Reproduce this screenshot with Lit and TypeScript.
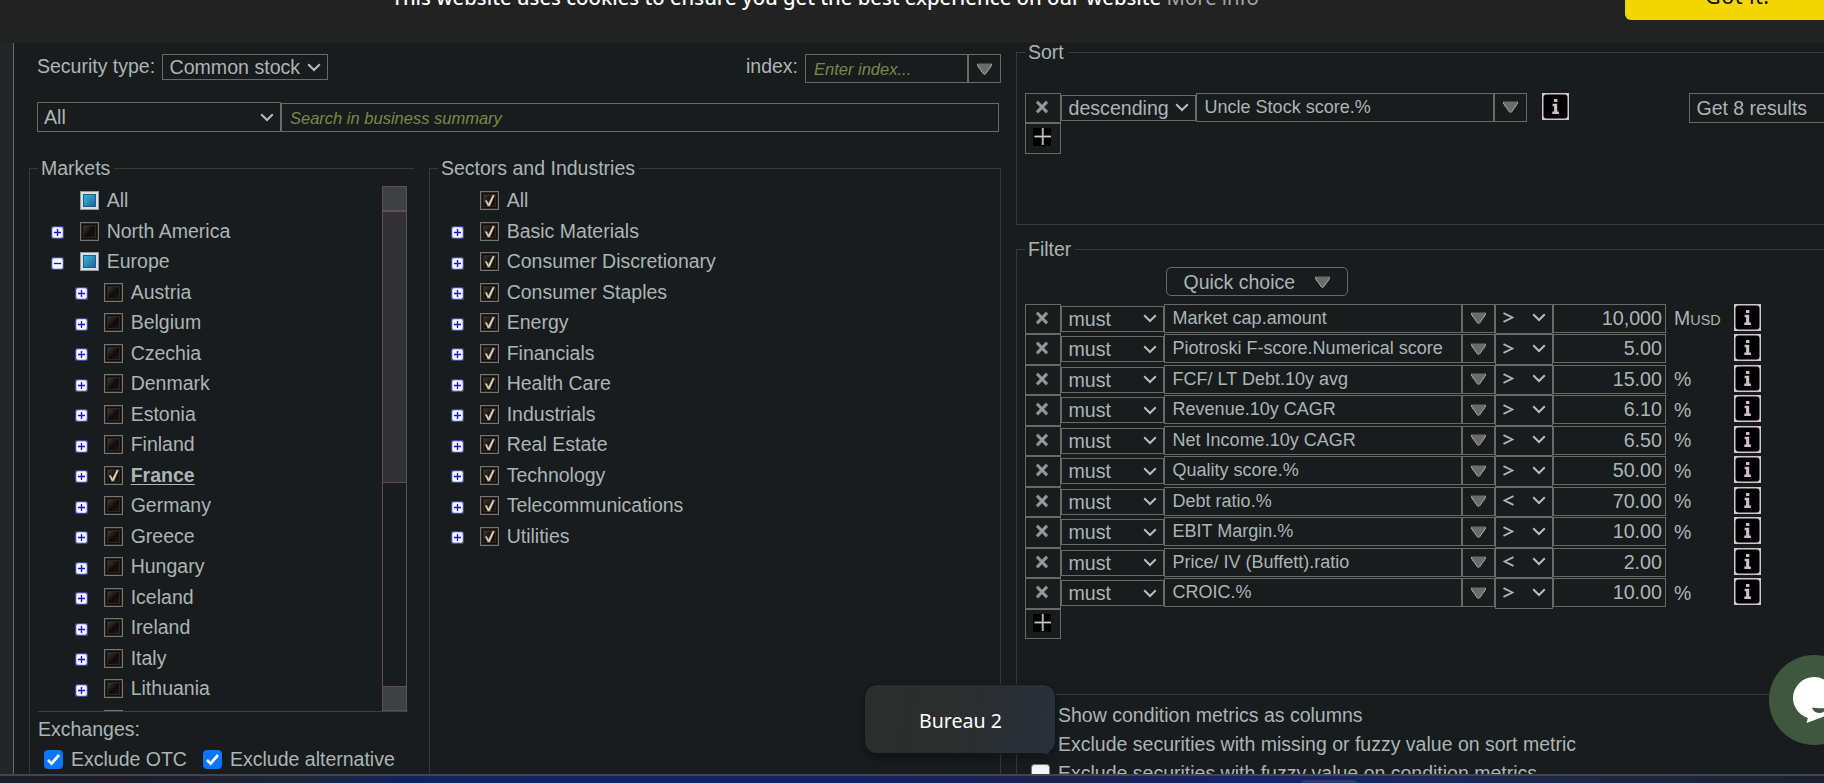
import { LitElement, html, css, svg, nothing } from "lit";
import { customElement, property } from "lit/decorators.js";

interface TreeNode {
  label: string;
  level: number;
  expander: "plus" | "minus" | "none";
  state: "on" | "off" | "mixed";
  strong?: boolean;
}

interface Condition {
  metric: string;
  op: string;
  value: string;
  unit: string;
}

const country = (label: string): TreeNode => ({ label, level: 1, expander: "plus", state: "off" });

const MARKETS: TreeNode[] = [
  { label: "All", level: 0, expander: "none", state: "mixed" },
  { label: "North America", level: 0, expander: "plus", state: "off" },
  { label: "Europe", level: 0, expander: "minus", state: "mixed" },
  ...["Austria", "Belgium", "Czechia", "Denmark", "Estonia", "Finland"].map(country),
  { label: "France", level: 1, expander: "plus", state: "on", strong: true },
  ...["Germany", "Greece", "Hungary", "Iceland", "Ireland", "Italy", "Lithuania", "Luxembourg"].map(country),
];

const SECTORS: TreeNode[] = [
  { label: "All", level: 0, expander: "none", state: "on" },
  ...[
    "Basic Materials", "Consumer Discretionary", "Consumer Staples", "Energy", "Financials", "Health Care",
    "Industrials", "Real Estate", "Technology", "Telecommunications", "Utilities",
  ].map((label): TreeNode => ({ label, level: 0, expander: "plus", state: "on" })),
];

const CONDITIONS: Condition[] = [
  { metric: "Market cap.amount", op: ">", value: "10,000", unit: "MUSD" },
  { metric: "Piotroski F-score.Numerical score", op: ">", value: "5.00", unit: "" },
  { metric: "FCF/ LT Debt.10y avg", op: ">", value: "15.00", unit: "%" },
  { metric: "Revenue.10y CAGR", op: ">", value: "6.10", unit: "%" },
  { metric: "Net Income.10y CAGR", op: ">", value: "6.50", unit: "%" },
  { metric: "Quality score.%", op: ">", value: "50.00", unit: "%" },
  { metric: "Debt ratio.%", op: "<", value: "70.00", unit: "%" },
  { metric: "EBIT Margin.%", op: ">", value: "10.00", unit: "%" },
  { metric: "Price/ IV (Buffett).ratio", op: "<", value: "2.00", unit: "" },
  { metric: "CROIC.%", op: ">", value: "10.00", unit: "%" },
];

const chevron = html`<svg class="chev" width="14" height="9" viewBox="0 0 14 9">
  <path d="M1.2 1.2 L7 7 L12.8 1.2" fill="none" stroke="#b4bec0" stroke-width="2" />
</svg>`;

const triangle = html`<svg class="tri" width="15" height="12" viewBox="0 0 15 12">
  <path d="M0 .5 H15 V2.5 L9 10.500 Q7.500 12.500 6 10.500 L0 2.500Z" fill="#6c6b6b" />
  <path d="M.6 1.500 V2.600 L6 10.200 Q7.500 12.300 9 10.200 L14.400 2.600 V1.500" fill="none" stroke="#b0acac" stroke-width="1.100" stroke-dasharray="1.600 .7" />
</svg>`;

const cross = html`<svg width="14" height="14" viewBox="0 0 14 14">
  <path d="M3 2.8 L11 11.2 M11 2.8 L3 11.2" stroke="#8d8989" stroke-width="3.2" stroke-linecap="square" />
  <path d="M3 2.8 L11 11.2 M11 2.8 L3 11.2" stroke="#a09c9c" stroke-width="1.4" />
</svg>`;

const plus = html`<svg width="18" height="18" viewBox="0 0 18 18">
  <rect width="18" height="18" fill="#000" />
  <path d="M1.5 8.5 H18 M9.8 0 V17" stroke="#6d6d6d" stroke-width="2.4" />
  <path d="M1.5 8.5 H18 M9.8 0 V17" stroke="#c9c9c9" stroke-width="1" />
</svg>`;

const info = html`<svg class="info" width="27" height="27" viewBox="0 0 27 27">
  <rect width="27" height="27" fill="#d2c4d0" />
  <rect x="1.5" y="1.5" width="24" height="24" rx="3" fill="#000" />
  <path d="M12 6 h3.400 v3 h-3.400z M10.600 10.800 h4.600 v7.800 h1.700 v2.400 h-6.600 v-2.400 h1.800 v-5.400 h-1.500z" fill="#cdbfcb" />
</svg>`;

@customElement("tree-row")
export class TreeRow extends LitElement {
  @property({ attribute: false }) node!: TreeNode;

  static styles = css`
    :host { display: flex; align-items: flex-start; height: 30.5px; flex: none; }
    .spacer { width: 24px; flex: none; }
    .exp { width: 13px; height: 13px; margin-top: 4.5px; flex: none; }
    .box { width: 19px; height: 19px; margin-left: 16px; flex: none; display: block; }
    .label { margin-left: 7.7px; line-height: 22px; margin-top: -2.4px; white-space: nowrap; }
    .strong { font-weight: bold; text-decoration: underline; text-underline-offset: 2px; text-decoration-thickness: 1px; }
  `;

  private expander() {
    if (this.node.expander === "none") return html`<span class="exp"></span>`;
    return html`<svg class="exp" viewBox="0 0 13 13">
      <rect x="0" y="0" width="13" height="13" rx="2.5" fill="#3e4896" />
      <rect x="1" y="1" width="11" height="11" rx="2" fill="#c9cdf2" />
      <rect x="2" y="2" width="9" height="9" rx="1" fill="#f6f7ff" />
      <path d=${this.node.expander === "plus" ? "M3 6.5 H10 M6.5 3 V10" : "M3 6.5 H10"} stroke="#1414d2" stroke-width="1.3" />
    </svg>`;
  }

  private box() {
    const s = this.node.state;
    return html`<svg class="box" viewBox="0 0 19 19">
      <defs>
        <linearGradient id="dark" x1="0" y1="0" x2="1" y2="1">
          <stop offset="0" stop-color="#3d3833" /><stop offset=".55" stop-color="#0e0b0a" /><stop offset="1" stop-color="#1d1816" />
        </linearGradient>
        <linearGradient id="blue" x1="0" y1="0" x2="1" y2="1">
          <stop offset="0" stop-color="#3ab6de" /><stop offset="1" stop-color="#1c6698" />
        </linearGradient>
      </defs>
      ${s === "mixed"
        ? svg`<rect width="19" height="19" fill="#96989a" /><rect x="1" y="1" width="17" height="17" fill="#dcdfe2" />
            <rect x="3" y="3" width="13" height="13" fill="#1c5f8e" /><rect x="4" y="4" width="11" height="11" fill="url(#blue)" />`
        : svg`<rect x=".5" y=".5" width="18" height="18" fill="#2d2927" stroke="#777472" />
            <rect x="2" y="2" width="15" height="15" fill="#0f0d0c" /><rect x="3" y="3" width="13" height="13" fill="#2a2623" />
            <rect x="4" y="4" width="11" height="11" fill="url(#dark)" />`}
      ${s === "on"
        ? svg`<path d="M4.6 9.2 L7 9 L8.4 11.8 L12.6 3.4 L15 4.2 L10 15.4 L7.6 15.6Z" fill="#8c7a55" />
            <path d="M5.4 9.8 L6.6 9.8 L8.4 13.4 L13 4.2 L14.2 4.6 L9.4 14.8 L8 14.8Z" fill="#e6e2d6" />`
        : nothing}
    </svg>`;
  }

  render() {
    return html`
      ${this.node.level ? html`<span class="spacer"></span>` : nothing}
      ${this.expander()}${this.box()}
      <span class="label ${this.node.strong ? "strong" : ""}">${this.node.label}</span>
    `;
  }
}

@customElement("app-root")
export class AppRoot extends LitElement {
  static styles = css`
    :host {
      display: flex; flex-direction: column; position: relative; width: 1824px; height: 783px; overflow: hidden;
      background: #181c1d; color: #abb5b6; font: 19.5px/22px "Liberation Sans", Arial, sans-serif;
    }
    * { box-sizing: border-box; }
    svg { display: block; flex: none; }

    .cookie { height: 43px; flex: none; background: #222; display: flex; align-items: flex-start; overflow: hidden;
      font: 20.3px/24px "Noto Sans", "Open Sans", sans-serif; color: #fff; padding-left: 391.5px; white-space: nowrap; }
    .msg { width: 1233.5px; flex: none; margin-top: -15.5px; font-weight: 500; }
    .more { color: #a2a5a8; font-weight: 400; }
    .got { flex: none; width: 260px; height: 40px; margin-top: -20px; border-radius: 6px; background: #f1d600; color: #111;
      padding: 4px 0 0 80px; font-size: 21.5px; letter-spacing: .5px; }

    .page { display: flex; height: 731px; flex: none; overflow: hidden; }
    .gutter { width: 14px; flex: none; background: #222627; border-right: 1px solid #6c6c6c; }
    .left { width: 1002px; flex: none; display: flex; flex-direction: column; }
    .right { width: 860px; flex: none; display: flex; flex-direction: column; }

    .field { border: 1px solid #6a6868; display: flex; align-items: center; white-space: nowrap; flex: none; }
    .sel { font-size: 19.6px; justify-content: space-between; padding: 0 6px 0 6.5px; }
    .ph { font-style: italic; font-size: 16.5px; color: #7c8748; padding-left: 8px; }
    .arrow { width: 33px; justify-content: center; padding-right: 1px; }

    .row1 { display: flex; margin-top: 11px; height: 29px; padding: 0 15px 0 23px; }
    .row1 .lab { width: 125px; line-height: 25px; }
    .row1 .idx { width: 59px; margin-left: auto; line-height: 25px; }
    .sectype { width: 166px; height: 26px; }
    .index { width: 163px; padding-left: 8px; }
    .row2 { display: flex; margin-top: 19px; height: 30px; padding-left: 23px; align-items: flex-end; }
    .scope { width: 244px; height: 30px; padding-left: 6px; padding-right: 6px; }
    .search { width: 718px; height: 29px; }
    .cols { display: flex; margin-top: 36px; flex: 1; padding-left: 15px; gap: 15px; }

    .panel { border: 0 solid #373b38; border-top-width: 1px; border-left-width: 1px; display: flex; flex-direction: column; flex: none; }
    .legend { align-self: flex-start; margin: -12px 0 0 8px; padding: 0 4px 0 3px; background: #181c1d; line-height: 22px; height: 22px; white-space: nowrap; }
    .markets { width: 385px; }
    .sectors { width: 572px; border-right-width: 1px; }
    .tree { display: flex; flex-direction: column; overflow: hidden; }
    .list { display: flex; margin: 7px 0 0 8px; width: 370px; height: 526px; border-bottom: 1px solid #3c403f; }
    .list .tree { width: 344px; padding: 5.4px 0 0 13px; }
    .sectors .tree { padding: 12.4px 0 0 21px; }
    .bar { width: 25px; display: flex; flex-direction: column; border: 1px solid #5f504e; height: 525px; }
    .cap { height: 23px; background: #3d4143; }
    .thumb { height: 273px; background: #323236; border: solid #5f504e; border-width: 2px 0 1px; }
    .track { flex: 1; border-bottom: 1px solid #5f504e; }
    .exch { margin: 6px 0 0 8px; }
    .checks { display: flex; align-items: center; margin: 8.4px 0 0 14px; height: 22px; white-space: nowrap; }
    .checks .t { margin-left: 8px; width: 132px; }

    .sort { margin-top: 9px; height: 173px; border-bottom-width: 1px; }
    .filter { margin-top: 24px; flex: 1; }
    .line { display: flex; height: 30.5px; margin-left: 8px; flex: none; align-items: flex-start; }
    .sort .line.first { margin-top: 29.6px; }
    .btn { width: 36px; height: 30.5px; border: 1px solid #6a6868; display: flex; align-items: center; justify-content: center; flex: none; }
    .btn.x { padding: 0 3px 2px 0; }
    .btn.p { padding: 0 2px 2px 0; }
    .dir { width: 135px; height: 26px; margin-top: 2px; padding-right: 6px; }
    .must { width: 103px; height: 26px; margin-top: 2px; padding-right: 6px; }
    .metric { width: 298px; height: 29px; font-size: 18px; padding: 0 0 1px 7.6px; }
    .line .arrow { height: 29px; }
    .op { width: 58px; height: 30.5px; padding: 0 6px 2px 7px; }
    .val { width: 113px; height: 29px; justify-content: flex-end; font-size: 19.7px; padding: 0 3px 1px 0; }
    .unit { width: 68px; padding: 3.5px 0 0 8px; height: 29px; }
    .usd { font-size: 14.4px; }
    .line .gapped { margin-left: 15px; }
    .get { margin-left: 120px; width: 170px; height: 30px; padding-left: 6.5px; font-size: 19.5px; }
    .quick { margin: 7px 0 7.6px 149px; width: 182px; height: 29px; border-radius: 5px; padding: 0 17px 0 16.5px; justify-content: space-between; }
    .metrics { border-top: 1px solid #373b38; margin-top: 54.5px; flex: 1; padding: 6px 0 0 14px; }
    .opt { display: flex; height: 29.1px; gap: 8px; align-items: center; white-space: nowrap; }

    .strip { flex: 1; border-top: 2px solid #42454b; display: flex; justify-content: flex-start;
      background: linear-gradient(90deg, #1c1e29 0, #201b29 110px, #1b2636 300px, #11225a 400px, #102263 560px, #142165 850px, #1d2048 1060px, #162163 1210px, #142365 1290px, #1a2652 1450px, #1c2440 1600px, #1d202c 100%); }
    .task { width: 58px; height: 12px; margin: 4px 0 0 1300px; border-radius: 5px; background: #2f3a67; }

    .tip { position: absolute; left: 865px; top: 685px; width: 190px; height: 68px; border-radius: 12px; color: #fff;
      background: linear-gradient(100deg, #2c2d2d 0, #2b2d2e 50%, #27303b 100%); box-shadow: 0 0 0 1px #131516, 0 5px 10px rgba(0, 0, 0, .35);
      font: 19.6px/71px "Noto Sans", "Open Sans", sans-serif; padding-left: 54px; white-space: nowrap; }
    .chat { position: absolute; left: 1769px; top: 655px; }
  `;

  private check(checked: boolean) {
    return html`<svg width="19" height="19" viewBox="0 0 19 19">
      <rect x=".5" y=".5" width="18" height="18" rx="3" fill=${checked ? "#0a75ff" : "#f4f4f4"} stroke=${checked ? "#0a75ff" : "#777"} />
      ${checked ? svg`<path d="M4 10 L7.6 13.6 L15 5" fill="none" stroke="#fff" stroke-width="2.7" />` : nothing}
    </svg>`;
  }

  private condition(c: Condition) {
    return html`<div class="line">
      <div class="btn x">${cross}</div>
      <div class="field sel must">must${chevron}</div>
      <div class="field metric">${c.metric}</div>
      <div class="field arrow">${triangle}</div>
      <div class="field sel op">
        <svg width="11" height="11" viewBox="0 0 11 11"><path d=${c.op === ">" ? "M.5 1.200 L9.500 5.500 L.5 9.800" : "M10.500 1.200 L1.500 5.500 L10.500 9.800"} fill="none" stroke="#abb5b6" stroke-width="1.9" /></svg>
        ${chevron}
      </div>
      <div class="field val">${c.value}</div>
      <div class="unit">${c.unit === "MUSD" ? html`M<span class="usd">USD</span>` : c.unit}</div>
      ${info}
    </div>`;
  }

  render() {
    return html`
      <div class="cookie">
        <div class="msg">This website uses cookies to ensure you get the best experience on our website <span class="more">More info</span></div>
        <div class="got">Got it!</div>
      </div>
      <div class="page">
        <div class="gutter"></div>
        <div class="left">
          <div class="row1">
            <span class="lab">Security type:</span>
            <div class="field sel sectype">Common stock${chevron}</div>
            <span class="idx">index:</span>
            <div class="field ph index">Enter index...</div>
            <div class="field arrow">${triangle}</div>
          </div>
          <div class="row2">
            <div class="field sel scope">All${chevron}</div>
            <div class="field ph search">Search in business summary</div>
          </div>
          <div class="cols">
            <div class="panel markets">
              <div class="legend">Markets</div>
              <div class="list">
                <div class="tree">${MARKETS.map((n) => html`<tree-row .node=${n}></tree-row>`)}</div>
                <div class="bar"><div class="cap"></div><div class="thumb"></div><div class="track"></div><div class="cap"></div></div>
              </div>
              <div class="exch">Exchanges:</div>
              <div class="checks">
                ${this.check(true)}<span class="t">Exclude OTC</span>
                ${this.check(true)}<span class="t">Exclude alternative</span>
              </div>
            </div>
            <div class="panel sectors">
              <div class="legend">Sectors and Industries</div>
              <div class="tree">${SECTORS.map((n) => html`<tree-row .node=${n}></tree-row>`)}</div>
            </div>
          </div>
        </div>
        <div class="right">
          <div class="panel sort">
            <div class="legend">Sort</div>
            <div class="line first">
              <div class="btn x">${cross}</div>
              <div class="field sel dir">descending${chevron}</div>
              <div class="field metric">Uncle Stock score.%</div>
              <div class="field arrow">${triangle}</div>
              <span class="gapped">${info}</span>
              <div class="field get">Get 8 results</div>
            </div>
            <div class="line"><div class="btn p">${plus}</div></div>
          </div>
          <div class="panel filter">
            <div class="legend">Filter</div>
            <div class="field quick">Quick choice${triangle}</div>
            ${CONDITIONS.map((c) => this.condition(c))}
            <div class="line"><div class="btn p">${plus}</div></div>
            <div class="metrics">
              <div class="opt">${this.check(false)}Show condition metrics as columns</div>
              <div class="opt">${this.check(true)}Exclude securities with missing or fuzzy value on sort metric</div>
              <div class="opt">${this.check(false)}Exclude securities with fuzzy value on condition metrics</div>
            </div>
          </div>
        </div>
      </div>
      <div class="strip"><div class="task"></div></div>
      <div class="tip">Bureau 2</div>
      <svg class="chat" width="90" height="90" viewBox="0 0 90 90">
        <circle cx="45" cy="45" r="45" fill="#40573f" />
        <path d="M45 22 A21 21 0 0 0 24 43 C24 52 29.5 59.5 38.8 63 L37.6 68 L55 61.5 A21 21 0 0 0 45 22Z" fill="#fff" />
        <path d="M43 52.6 Q50 54 57 52.6 Q56 58 50 58 Q44.500 58 43 52.6Z" fill="#40573f" />
      </svg>
    `;
  }
}
